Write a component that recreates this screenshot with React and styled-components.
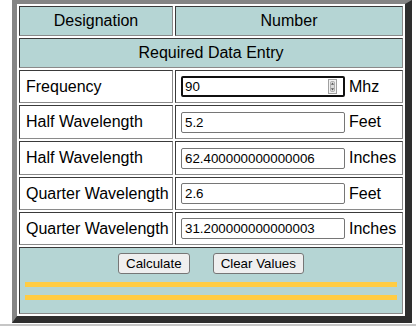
import React from 'react';
import styled, { createGlobalStyle } from 'styled-components';

const Global = createGlobalStyle`
  html, body { margin: 0; padding: 0; background: #fff; }
  body { font-family: "Liberation Sans", Arial, sans-serif; color: #000; }
`;

const Page = styled.div`
  padding-left: 12px;
`;

const Frame = styled.div`
  width: 400px;
  box-sizing: border-box;
  border-style: solid;
  border-width: 4px 7px 7px 5px;
  border-color: #858585 #2e2e2e #2e2e2e #858585;
  padding: 2px;
  display: grid;
  grid-template-columns: 154px 228px;
  grid-template-rows: 30px 30px 33px 34px 34px 33px 33px 67px;
  gap: 2px;
`;

const Cell = styled.div`
  box-sizing: border-box;
  border: 1px solid;
  border-color: #3a3a3a #8a8a8a #8a8a8a #3a3a3a;
  background: ${p => (p.$tinted ? '#b5d5d4' : '#fff')};
  display: flex;
  align-items: center;
  font-size: 16px;
  grid-column: span ${p => p.$span || 1};
`;

const HeadCell = styled(Cell)`
  justify-content: center;
`;

const LabelCell = styled(Cell)`
  padding-left: 6px;
`;

const ValueCell = styled(Cell)`
  padding-left: 5px;
  gap: 4px;
`;

const Field = styled.span`
  position: relative;
  display: inline-flex;
`;

const Input = styled.input`
  box-sizing: border-box;
  width: 164px;
  height: 21px;
  margin: 0;
  font-family: "Liberation Sans", Arial, sans-serif;
  font-size: 13.333px;
  color: #000;
  background: #fff;
  border-radius: 2px;
  outline: none;
  border: ${p => (p.$focused ? '2px solid #101010' : '1px solid #767676')};
  padding: ${p => (p.$focused ? '1px 2px' : '2px 3px')};
`;

const Spinner = styled.svg`
  position: absolute;
  right: 8px;
  top: 3px;
`;

const Unit = styled.span`
  font-size: 16px;
`;

const FooterCell = styled(Cell)`
  flex-direction: column;
  align-items: stretch;
  padding: 5px;
`;

const ButtonRow = styled.div`
  display: flex;
  justify-content: center;
  gap: 23px;
  height: 21px;
`;

const Button = styled.button`
  box-sizing: border-box;
  height: 21px;
  margin: 0;
  padding: 1px 7px;
  font-family: "Liberation Sans", Arial, sans-serif;
  font-size: 13.333px;
  line-height: 15px;
  color: #000;
  background: #efefef;
  border: 1px solid #767676;
  border-radius: 3px;
`;

const YellowRule = styled.div`
  height: 5px;
  margin-top: 8px;
  background: #ffcc44;
`;

const BaseLine = styled.div`
  margin-top: 1px;
  height: 2px;
  background: #c6c6c6;
`;

const rows = [
  { label: 'Frequency', value: '90', unit: 'Mhz', focused: true },
  { label: 'Half Wavelength', value: '5.2', unit: 'Feet' },
  { label: 'Half Wavelength', value: '62.400000000000006', unit: 'Inches' },
  { label: 'Quarter Wavelength', value: '2.6', unit: 'Feet' },
  { label: 'Quarter Wavelength', value: '31.200000000000003', unit: 'Inches' },
];

export default function App() {
  return (
    <>
      <Global />
      <Page>
        <Frame>
          <HeadCell $tinted>Designation</HeadCell>
          <HeadCell $tinted>Number</HeadCell>
          <HeadCell $tinted $span={2}>Required Data Entry</HeadCell>
          {rows.map((r, i) => (
            <React.Fragment key={i}>
              <LabelCell>{r.label}</LabelCell>
              <ValueCell>
                <Field>
                  <Input $focused={r.focused} defaultValue={r.value} readOnly />
                  {r.focused && (
                    <Spinner width="9" height="15" viewBox="0 0 9 15">
                      <rect x="0.5" y="0.5" width="8" height="14" fill="#f2f2f2" stroke="#a0a0a0" />
                      <rect x="2.5" y="2.5" width="4" height="10" rx="1" fill="#dadada" stroke="#8a8a8a" strokeWidth="0.6" />
                      <path d="M4.5 3.5 L6 5.8 H3 Z" fill="#555" />
                      <path d="M3 9.2 H6 L4.5 11.5 Z" fill="#555" />
                    </Spinner>
                  )}
                </Field>
                <Unit>{r.unit}</Unit>
              </ValueCell>
            </React.Fragment>
          ))}
          <FooterCell $tinted $span={2}>
            <ButtonRow>
              <Button>Calculate</Button>
              <Button>Clear Values</Button>
            </ButtonRow>
            <YellowRule />
            <YellowRule />
          </FooterCell>
        </Frame>
      </Page>
      <BaseLine />
    </>
  );
}
